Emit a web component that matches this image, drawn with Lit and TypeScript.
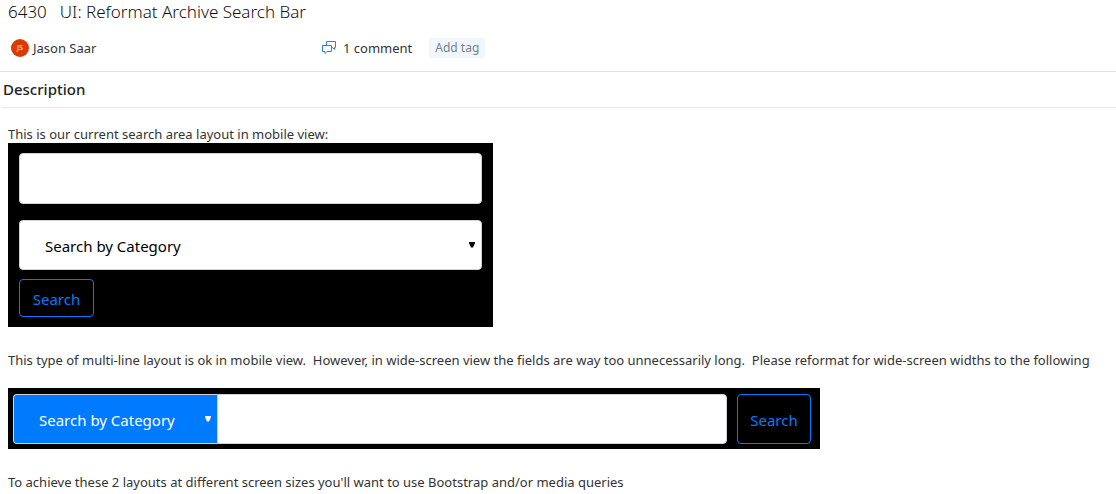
import { LitElement, html, css } from "lit";
import { customElement, property } from "lit/decorators.js";

@customElement("archive-search")
class ArchiveSearch extends LitElement {
  @property({ reflect: true }) layout: "stacked" | "inline" = "stacked";

  static styles = css`
    :host {
      display: block;
      box-sizing: border-box;
      width: 100%;
      background: #000;
      font-family: "Segoe UI", "Noto Sans", "Open Sans", sans-serif;
    }
    :host([layout="stacked"]) {
      max-width: 485px;
      padding: 10px 11px;
    }
    :host([layout="inline"]) {
      max-width: 812px;
      padding: 6px 9px 5px 5px;
    }
    form {
      display: flex;
      margin: 0;
    }
    .stacked {
      flex-direction: column;
      align-items: flex-start;
    }
    .inline {
      gap: 10px;
    }
    .group {
      display: flex;
      flex: 1;
      min-width: 0;
    }
    .field,
    .category,
    .submit {
      box-sizing: border-box;
      margin: 0;
      border: 1px solid #ced4da;
      border-radius: 4px;
      font-family: inherit;
      font-size: 15px;
      line-height: 24px;
    }
    .field {
      width: 100%;
      min-width: 0;
      height: 50px;
      padding: 6px 12px;
      background: #fff;
    }
    .stacked .field {
      height: 51px;
      margin-bottom: 16px;
    }
    .picker {
      display: grid;
      align-items: center;
    }
    .stacked .picker {
      width: 100%;
      margin-bottom: 9px;
    }
    .inline .picker {
      flex: 0 0 204px;
    }
    .category,
    .caret {
      grid-area: 1 / 1;
    }
    .category {
      appearance: none;
      width: 100%;
      height: 50px;
      padding: 2px 24px 0 25px;
      background: #fff;
      color: #000;
    }
    .caret {
      justify-self: end;
      width: 6px;
      height: 6px;
      margin-right: 7px;
      pointer-events: none;
      fill: #000;
    }
    .inline .category {
      border-right: 0;
      border-radius: 4px 0 0 4px;
      background: #007bff;
      color: #fff;
    }
    .inline .caret {
      margin-right: 6px;
      fill: #fff;
    }
    .inline .field {
      border-radius: 0 4px 4px 0;
    }
    .submit {
      padding: 4px 0 2px;
      width: 75px;
      height: 38px;
      border-color: #007bff;
      background: transparent;
      color: #007bff;
    }
    .inline .submit {
      width: 74px;
      height: 50px;
    }
  `;

  private renderField() {
    return html`<input class="field" type="text" aria-label="Search text" />`;
  }

  private renderPicker() {
    return html`<div class="picker">
      <select class="category" aria-label="Category">
        <option>Search by Category</option>
      </select>
      <svg class="caret" viewBox="0 0 6 6" aria-hidden="true"><path d="M0 0H6V1L4 5.5H2L0 1Z" /></svg>
    </div>`;
  }

  render() {
    const submit = html`<button class="submit" type="button">Search</button>`;
    return this.layout === "inline"
      ? html`<form class="inline">
          <div class="group">${this.renderPicker()}${this.renderField()}</div>
          ${submit}
        </form>`
      : html`<form class="stacked">${this.renderField()}${this.renderPicker()}${submit}</form>`;
  }
}

@customElement("app-root")
class AppRoot extends LitElement {
  static styles = css`
    :host {
      display: block;
      overflow-x: hidden;
      background: #fff;
      color: #333;
      font-family: "Segoe UI", "Noto Sans", "Open Sans", sans-serif;
      font-size: 13px;
      line-height: 18px;
    }
    .title {
      display: flex;
      gap: 13px;
      margin: 0;
      padding: 0 8px;
      font-size: 17px;
      font-weight: 300;
      line-height: 24px;
      color: #111;
    }
    .meta {
      display: flex;
      align-items: center;
      height: 47px;
      padding-left: 11px;
      border-bottom: 1px solid #e4e4e4;
    }
    .person {
      display: flex;
      align-items: center;
      gap: 4px;
      flex: 0 0 311px;
    }
    .avatar {
      width: 18px;
      height: 18px;
      border-radius: 50%;
      background: #da3b01;
      color: #fff;
      font-size: 7px;
      line-height: 18px;
      text-align: center;
    }
    .comments {
      display: flex;
      align-items: center;
      gap: 7px;
      color: inherit;
      text-decoration: none;
    }
    .bubbles {
      width: 14px;
      height: 14px;
      fill: #fff;
      stroke: #1e8ae6;
    }
    .tag {
      margin: 0 0 0 17px;
      height: 20px;
      padding: 0 6px;
      border: 0;
      background: #eff6fc;
      color: #7c8084;
      font: inherit;
      font-size: 12px;
      line-height: 20px;
    }
    .heading {
      margin: 0 0 0 2px;
      padding: 0 1px;
      border-bottom: 1px solid #e8e8e8;
      color: #222;
      font-size: 15px;
      font-weight: 500;
      line-height: 35px;
    }
    .body {
      padding: 17px 0 2px 8px;
    }
    .text {
      margin: 0;
      white-space: pre-wrap;
    }
    .after {
      margin-top: 24px;
    }
    .before {
      margin-bottom: 19px;
    }
  `;

  render() {
    return html`
      <h1 class="title"><span>6430</span><span>UI: Reformat Archive Search Bar</span></h1>
      <div class="meta">
        <div class="person"><span class="avatar">JS</span><span>Jason Saar</span></div>
        <a class="comments" href="#comments">
          <svg class="bubbles" viewBox="0 0 14 14" aria-hidden="true">
            <path d="M4.5 .5H13.5V6.5H12.5V8.5L10.5 6.5H4.5Z" />
            <path d="M.5 4.5H9.5V10.5H5L3 12.5V10.5H.5Z" />
          </svg>
          <span>1 comment</span>
        </a>
        <button class="tag" type="button">Add tag</button>
      </div>
      <h2 class="heading">Description</h2>
      <div class="body">
        <p class="text">This is our current search area layout in mobile view:</p>
        <archive-search layout="stacked"></archive-search>
        <p class="text after before">This type of multi-line layout is ok in mobile view.  However, in wide-screen view the fields are way too unnecessarily long.  Please reformat for wide-screen widths to the following</p>
        <archive-search layout="inline"></archive-search>
        <p class="text after">To achieve these 2 layouts at different screen sizes you'll want to use Bootstrap and/or media queries</p>
      </div>
    `;
  }
}
